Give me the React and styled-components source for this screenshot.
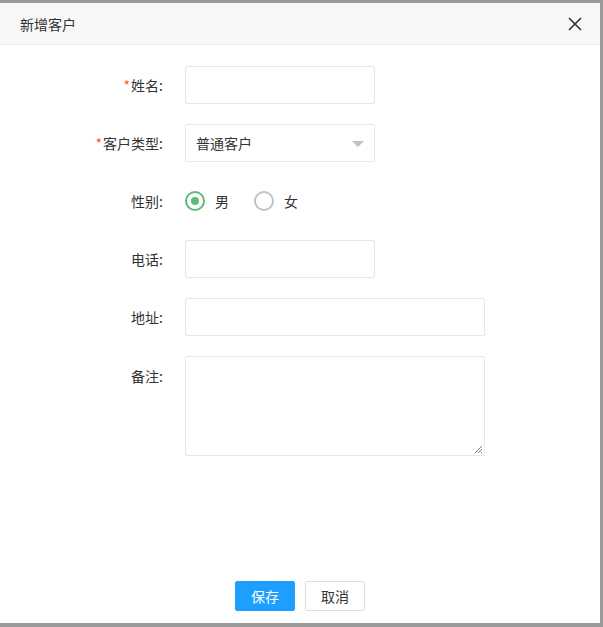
import React from "react";
import styled, { createGlobalStyle } from "styled-components";

const G = createGlobalStyle`
  html,body{margin:0;padding:0;background:#999;}
  body{font-family:"Noto Sans CJK SC","Liberation Sans",sans-serif;}
`;
const Frame = styled.div`
  width:603px;height:627px;box-sizing:border-box;padding:3px 3px 4px 0;background:#9a9a9a;
`;
const Dialog = styled.div`
  background:#fff;height:100%;display:flex;flex-direction:column;
`;
const Header = styled.div`
  height:42px;flex:none;box-sizing:border-box;border-bottom:1px solid #eee;background:#f8f8f8;
  display:flex;align-items:center;justify-content:space-between;padding:0 18px 0 20px;
  font-size:14px;color:#333;
`;
const Body = styled.div`
  flex:1;padding-top:21px;display:flex;flex-direction:column;gap:20px;
`;
const Row = styled.div`
  display:flex;align-items:${p => (p.top ? "flex-start" : "center")};min-height:38px;
`;
const Label = styled.div`
  width:163px;text-align:right;margin-right:22px;font-size:14px;color:#333;
  padding-top:${p => (p.top ? "10px" : "0")};
`;
const Star = styled.span`color:#ff5722;margin-right:1px;`;
const Input = styled.div`
  width:${p => p.w}px;height:${p => p.h || 38}px;box-sizing:border-box;border:1px solid #e6e6e6;
  border-radius:2px;background:#fff;position:relative;display:flex;align-items:center;
  padding-left:10px;font-size:14px;color:#333;
`;
const Caret = styled.span`
  position:absolute;right:10px;top:16px;border:6px solid transparent;border-top-color:#c2c2c2;border-bottom:none;
`;
const Radios = styled.div`display:flex;align-items:center;gap:25px;font-size:14px;color:#333;`;
const Radio = styled.label`display:flex;align-items:center;gap:10px;`;
const Circle = styled.span`
  width:20px;height:20px;box-sizing:border-box;border-radius:50%;
  border:2px solid ${p => (p.on ? "#5FB878" : "#c2c2c2")};display:flex;align-items:center;justify-content:center;
  &::after{content:"";width:8px;height:8px;border-radius:50%;background:${p => (p.on ? "#5FB878" : "transparent")};}
`;
const Grip = styled.svg`position:absolute;right:1px;bottom:1px;`;
const Footer = styled.div`display:flex;justify-content:center;gap:10px;padding-bottom:12px;`;
const Btn = styled.button`
  width:60px;height:30px;border-radius:2px;font-size:14px;font-family:inherit;cursor:pointer;
  border:1px solid ${p => (p.primary ? "#1E9FFF" : "#dedede")};
  background:${p => (p.primary ? "#1E9FFF" : "#fff")};color:${p => (p.primary ? "#fff" : "#333")};
`;

export default function App() {
  return (
    <Frame>
      <G />
      <Dialog>
        <Header>
          <span>新增客户</span>
          <svg width="14" height="14" viewBox="0 0 14 14"><path d="M1 1L13 13M13 1L1 13" stroke="#333" strokeWidth="1.6" /></svg>
        </Header>
        <Body>
          <Row><Label><Star>*</Star>姓名:</Label><Input w={190} /></Row>
          <Row><Label><Star>*</Star>客户类型:</Label><Input w={190}>普通客户<Caret /></Input></Row>
          <Row><Label>性别:</Label>
            <Radios>
              <Radio><Circle on />男</Radio>
              <Radio><Circle />女</Radio>
            </Radios>
          </Row>
          <Row><Label>电话:</Label><Input w={190} /></Row>
          <Row><Label>地址:</Label><Input w={300} /></Row>
          <Row top><Label top>备注:</Label>
            <Input w={300} h={100}>
              <Grip width="9" height="9" viewBox="0 0 9 9"><path d="M8 1L1 8M8 4L4 8M8 7L7 8" stroke="#777" strokeWidth="1" /></Grip>
            </Input>
          </Row>
        </Body>
        <Footer>
          <Btn primary>保存</Btn>
          <Btn>取消</Btn>
        </Footer>
      </Dialog>
    </Frame>
  );
}
